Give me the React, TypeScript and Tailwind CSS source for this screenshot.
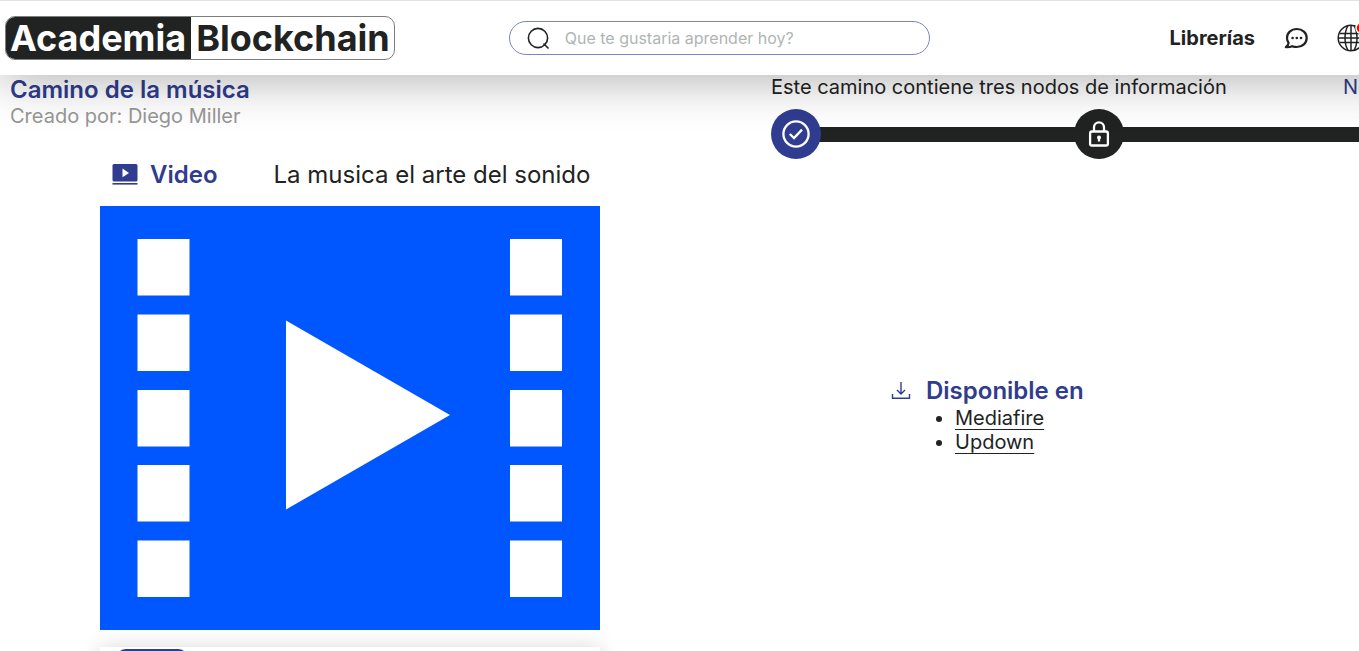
import React from "react";

function SearchIcon() {
  return (
    <svg className="size-6 shrink-0" viewBox="0 0 24 24" fill="none" stroke="#212322" strokeWidth="1.6" aria-hidden="true">
      <circle cx="12" cy="12" r="9.6" />
      <path d="M17.5 17.5 22.5 22.5" />
    </svg>
  );
}

function ChatIcon() {
  return (
    <svg className="size-6" viewBox="0 0 24 24" fill="none" stroke="#212322" strokeWidth="2.2" strokeLinejoin="round" aria-hidden="true">
      <path d="M12.800 3C7 3 3 7 3 12c0 1.900.6 3.500 1.600 4.900-.1 1.500-.9 3-2.800 4.300 2.600.1 4.700-.1 6.400-1 1.400.5 2.900.8 4.600.8 5.800 0 9.900-4 9.900-9S18.600 3 12.800 3Z" />
      <g fill="#212322" stroke="none">
        <circle cx="8.600" cy="12" r="1.300" />
        <circle cx="12.800" cy="12" r="1.300" />
        <circle cx="17" cy="12" r="1.300" />
      </g>
    </svg>
  );
}

function GlobeIcon() {
  return (
    <svg className="size-7" viewBox="0 0 28 28" fill="none" stroke="#212322" strokeWidth="1.500" aria-hidden="true">
      <circle cx="14" cy="14" r="12.800" />
      <path d="M14 1v26M3 9.500h22M3 18.500h22M1 14h26" />
      <path d="M11 1.500c-4 7-4 18 0 25M17 1.500c4 7 4 18 0 25" />
      <circle cx="24.500" cy="4" r="5.500" fill="#ff0000" stroke="#ffffff" strokeWidth="1.500" />
    </svg>
  );
}

function VideoIcon() {
  return (
    <svg className="h-6 w-[26px]" viewBox="0 0 26 24" aria-hidden="true">
      <rect x="0.500" y="1" width="25" height="17.500" rx="1.500" fill="#303c8f" />
      <path d="M10.500 5.600v8.600L17 9.900Z" fill="#ffffff" />
      <rect x="0.500" y="20" width="25" height="1.600" fill="#303c8f" />
    </svg>
  );
}

function DownloadIcon() {
  return (
    <svg className="size-5" viewBox="0 0 20 20" fill="none" stroke="#303c8f" strokeWidth="1.400" aria-hidden="true">
      <path d="M10 1v12M6 9l4 4 4-4M1.500 13v4.300h17V13" />
    </svg>
  );
}

function CheckIcon() {
  return (
    <svg className="size-7" viewBox="0 0 28 28" fill="none" stroke="#ffffff" strokeWidth="2.300" aria-hidden="true">
      <circle cx="14" cy="14" r="12.600" />
      <path d="m7.800 14 4.200 4 8-8.400" />
    </svg>
  );
}

function LockIcon() {
  return (
    <svg className="size-7" viewBox="0 0 28 28" fill="none" stroke="#ffffff" strokeWidth="2.300" aria-hidden="true">
      <rect x="5.100" y="11.500" width="17.800" height="14" rx="1.800" />
      <path d="M9 11.500V7.300a5 5 0 0 1 10 0v4.200" />
      <circle cx="14" cy="17.400" r="2" fill="#ffffff" stroke="none" />
      <path d="M14 17.500v4" />
    </svg>
  );
}

const holes = [33, 108.5, 184, 259, 334.5];

function FilmPoster() {
  return (
    <svg className="block w-full" viewBox="0 0 500 424" role="img" aria-label="Video">
      <rect width="500" height="424" fill="#0057ff" />
      {holes.map((y) => (
        <g key={y} fill="#ffffff">
          <rect x="37.500" y={y} width="52" height="56.500" />
          <rect x="410" y={y} width="52" height="56.500" />
        </g>
      ))}
      <path d="M186 114.500v189L350 209Z" fill="#ffffff" />
    </svg>
  );
}

function Header() {
  return (
    <header className="relative z-10 -mr-14 flex h-[75px] items-center border-t border-[#e2e2e2] bg-white pr-[50px] pl-[5px] shadow-[0_4px_50px_rgba(0,0,0,0.32)]">
      <a href="#" className="flex h-11 shrink-0 overflow-hidden rounded-[10px] border border-[#7c7d7d] text-4xl leading-[42px] font-bold">
        <span className="-m-px bg-[#212322] py-px pr-[5px] pl-[5px] text-white">Academia</span>
        <span className="pr-1 pl-1.5">Blockchain</span>
      </a>
      <label className="ml-[114px] flex h-[34px] w-[421px] shrink-0 items-center gap-[15px] rounded-full border border-[#7c85c4] pl-4">
        <SearchIcon />
        <input
          type="search"
          aria-label="Buscar"
          placeholder="Que te gustaria aprender hoy?"
          className="min-w-0 flex-1 bg-transparent text-base outline-none placeholder:text-[#afb4b4]"
        />
      </label>
      <nav className="ml-auto flex shrink-0 items-center gap-[29px]">
        <a href="#" className="text-xl font-bold">Librerías</a>
        <button type="button" aria-label="Mensajes"><ChatIcon /></button>
        <button type="button" aria-label="Idioma"><GlobeIcon /></button>
      </nav>
    </header>
  );
}

export default function App() {
  return (
    <div className="h-screen overflow-hidden bg-white font-['Inter',sans-serif] text-[#212322]">
      <Header />
      <main className="flex">
        <section className="w-[771px] shrink-0">
          <div className="pt-px pl-2.5">
            <h1 className="text-2xl leading-7 font-semibold text-[#303c8f]">Camino de la música</h1>
            <p className="text-xl leading-6 text-[#979797]">Creado por: Diego Miller</p>
          </div>
          <div className="ml-[100px] w-[500px]">
            <div className="flex h-[78px] items-center pt-[15px] pl-3 text-2xl">
              <VideoIcon />
              <h2 className="ml-3 font-semibold text-[#303c8f]">Video</h2>
              <p className="ml-14 whitespace-nowrap">La musica el arte del sonido</p>
            </div>
            <FilmPoster />
            <div className="mt-[17px] h-40 px-4 pt-0.5 shadow-[0_0_20px_rgba(0,0,0,0.15)]">
              <button type="button" aria-label="Información" className="block h-9 w-[72px] rounded-[10px] bg-[#303c8f]" />
            </div>
          </div>
        </section>
        <section className="w-[656px] shrink-0">
          <div className="flex justify-between text-xl leading-6">
            <p>Este camino contiene tres nodos de información</p>
            <p className="w-[84px] text-[#303c8f]">Nodos</p>
          </div>
          <div className="mt-2.5 flex items-center">
            <span className="z-1 flex size-[50px] items-center justify-center rounded-full bg-[#303c8f]"><CheckIcon /></span>
            <span className="-mx-1 h-[15px] flex-1 bg-[#212322]" />
            <span className="z-1 flex size-[50px] items-center justify-center rounded-full bg-[#212322]"><LockIcon /></span>
            <span className="-mx-1 h-[15px] flex-1 bg-[#212322]" />
            <span className="z-1 flex size-[50px] items-center justify-center rounded-full bg-[#212322]"><LockIcon /></span>
          </div>
          <div className="mt-[217px] ml-[120px]">
            <div className="flex items-center gap-[15px]">
              <DownloadIcon />
              <h2 className="text-2xl leading-[30px] font-semibold text-[#303c8f]">Disponible en</h2>
            </div>
            <ul className="list-disc pl-16 text-xl leading-6">
              <li><a href="#" className="underline decoration-1 underline-offset-4">Mediafire</a></li>
              <li><a href="#" className="underline decoration-1 underline-offset-4">Updown</a></li>
            </ul>
          </div>
        </section>
      </main>
    </div>
  );
}
